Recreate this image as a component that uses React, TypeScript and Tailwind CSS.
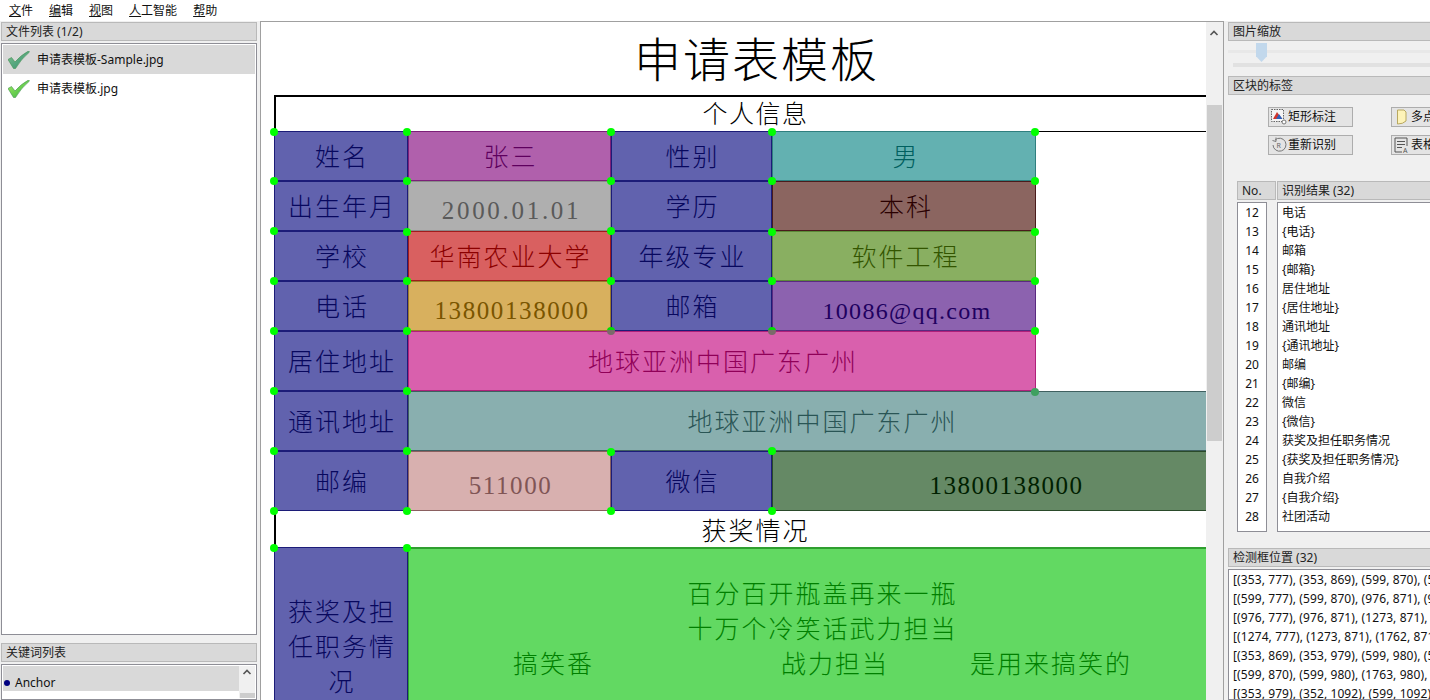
const menus = [
  ['文', '件'],
  ['编', '辑'],
  ['视', '图'],
  ['人', '工智能'],
  ['帮', '助'],
];

const results = [
  ['12', '电话'],
  ['13', '{电话}'],
  ['14', '邮箱'],
  ['15', '{邮箱}'],
  ['16', '居住地址'],
  ['17', '{居住地址}'],
  ['18', '通讯地址'],
  ['19', '{通讯地址}'],
  ['20', '邮编'],
  ['21', '{邮编}'],
  ['22', '微信'],
  ['23', '{微信}'],
  ['24', '获奖及担任职务情况'],
  ['25', '{获奖及担任职务情况}'],
  ['26', '自我介绍'],
  ['27', '{自我介绍}'],
  ['28', '社团活动'],
];

const boxes = [
  '[(353, 777), (353, 869), (599, 870), (599, 778)]',
  '[(599, 777), (599, 870), (976, 871), (976, 777)]',
  '[(976, 777), (976, 871), (1273, 871), (1274, 777)]',
  '[(1274, 777), (1273, 871), (1762, 871), (1762, 777)]',
  '[(353, 869), (353, 979), (599, 980), (599, 870)]',
  '[(599, 870), (599, 980), (1763, 980), (1762, 871)]',
  '[(353, 979), (352, 1092), (599, 1092), (599, 980)]',
];

// handles sit on top of the table, positions are relative to the canvas
const dots = [
  'left-[9px] top-[106px]', 'left-[142px] top-[106px]', 'left-[346px] top-[106px]', 'left-[507px] top-[106px]', 'left-[770px] top-[106px]',
  'left-[9px] top-[155px]', 'left-[142px] top-[155px]', 'left-[346px] top-[155px]', 'left-[507px] top-[155px]', 'left-[770px] top-[155px]',
  'left-[9px] top-[205px]', 'left-[142px] top-[206px]', 'left-[346px] top-[205px]', 'left-[507px] top-[206px]', 'left-[770px] top-[206px]',
  'left-[9px] top-[255px]', 'left-[142px] top-[255px]', 'left-[346px] top-[255px]', 'left-[507px] top-[255px]', 'left-[770px] top-[255px]',
  'left-[9px] top-[305px]', 'left-[142px] top-[305px]', 'left-[770px] top-[305px]',
  'left-[9px] top-[365px]', 'left-[142px] top-[365px]',
  'left-[9px] top-[425px]', 'left-[142px] top-[425px]', 'left-[346px] top-[426px]', 'left-[507px] top-[425px]',
  'left-[9px] top-[485px]', 'left-[142px] top-[485px]', 'left-[346px] top-[485px]', 'left-[507px] top-[485px]',
  'left-[9px] top-[522px]', 'left-[142px] top-[522px]',
];

const labelCell = 'flex items-center justify-center pl-[2px] bg-[#6162ae] border border-[#1c1c78] text-[#08085e]';
const valueCell = 'flex items-center justify-center border';

function PanelHeader({ children, className = '' }: { children: React.ReactNode; className?: string }) {
  return (
    <div className={`h-[19px] shrink-0 bg-[#d9d9d9] border border-[#b9b9b9] pl-[4px] text-[12px] leading-[17px] text-[#222] whitespace-nowrap ${className}`}>
      {children}
    </div>
  );
}

function Check({ id, from, to }: { id: string; from: string; to: string }) {
  return (
    <svg width="22" height="18" viewBox="0 0 22 18" className="shrink-0">
      <defs>
        <linearGradient id={id} x1="0" y1="0" x2="1" y2="1">
          <stop offset="0" stopColor={from} />
          <stop offset="1" stopColor={to} />
        </linearGradient>
      </defs>
      <path d="M0 8.5 L3.5 6.5 L7 11 Q13 4 20.5 0 L21.5 1 Q13 8 7.5 17.5 L5.5 17.5 Z" fill={`url(#${id})`} stroke="#3f8f4f" strokeWidth="0.6" />
    </svg>
  );
}

function ToolButton({ icon, label }: { icon: React.ReactNode; label: string }) {
  return (
    <div className="w-[85px] h-[20px] shrink-0 flex items-center gap-[1px] pl-[2px] bg-[#e4e4e4] border border-[#adadad] text-[12px] text-[#111] whitespace-nowrap">
      {icon}
      {label}
    </div>
  );
}

export default function App() {
  return (
    <div className="w-[1430px] h-[700px] overflow-hidden bg-[#f0f0f0] flex flex-col font-['Noto_Sans','Noto_Sans_CJK_SC',sans-serif]">
      <div className="h-[21px] shrink-0 bg-white flex items-center pl-[9px] gap-[16px] text-[12px] text-[#111]">
        {menus.map(([a, b]) => (
          <span key={a}>
            <span className="underline">{a}</span>
            {b}
          </span>
        ))}
      </div>

      <div className="flex flex-1 min-h-0">
        {/* left */}
        <div className="w-[258px] shrink-0 flex flex-col pl-[1px] pt-[1px]">
          <PanelHeader className="w-[256px]">文件列表 (1/2)</PanelHeader>
          <div className="w-[256px] h-[592px] mt-[2px] bg-white border border-[#8e8e96] p-[1px] text-[12px] text-[#111]">
            <div className="h-[29px] flex items-center gap-[7px] pl-[5px] bg-[#d9d9d9]">
              <Check id="c1" from="#7fc08f" to="#2f8f6f" />
              申请表模板-Sample.jpg
            </div>
            <div className="h-[29px] flex items-center gap-[7px] pl-[5px]">
              <Check id="c2" from="#a8f060" to="#30b040" />
              申请表模板.jpg
            </div>
          </div>
          <PanelHeader className="w-[256px] mt-[8px]">关键词列表</PanelHeader>
          <div className="w-[256px] flex-1 mt-[2px] bg-white border border-[#8e8e96] p-[1px] flex">
            <div className="flex-1">
              <div className="h-[25px] flex items-center gap-[5px] pl-[1px] pt-[8px] bg-[#d9d9d9] text-[12px] text-[#111]">
                <span className="w-[6px] h-[6px] rounded-full bg-[#000080]" />
                Anchor
              </div>
            </div>
            <div className="w-[16px] bg-[#f0f0f0] flex flex-col items-center">
              <svg width="10" height="8" viewBox="0 0 10 8" className="mt-[2px]">
                <path d="M1.5 6 L5 2.5 L8.5 6" fill="none" stroke="#555" strokeWidth="1.6" />
              </svg>
              <div className="w-[15px] flex-1 mt-[17px] bg-[#cdcdcd]" />
            </div>
          </div>
        </div>

        {/* canvas */}
        <div className="w-[964px] shrink-0 ml-[2px] flex border border-[#a0a0a0] border-b-0">
          <div className="relative w-[945px] h-full overflow-hidden bg-white font-['Liberation_Serif','Noto_Sans_CJK_SC',serif] font-light">
            <div className="w-[961px] ml-[13px]">
              <div className="h-[73px] pt-[5px] pl-[4px] flex items-center justify-center text-[47px] tracking-[2px] text-black">申请表模板</div>
              <div className="h-[36px] pt-[2px] border-t-2 border-l-2 border-black flex items-center justify-center text-[25px] tracking-[1.5px] text-black">个人信息</div>
              <div className="grid grid-cols-[134px_203px_161px_264px_199px] grid-rows-[50px_50px_50px_50px_60px_60px_60px_36px_170px] text-[25px] tracking-[2px]">
                <div className={`${labelCell} pt-[3px]`}>姓名</div>
                <div className={`${valueCell} pt-[3px] pl-[2px] bg-[#b060ac] border-[#7c1f78] text-[#5e005e]`}>张三</div>
                <div className={`${labelCell} pt-[3px]`}>性别</div>
                <div className={`${valueCell} pt-[3px] pl-[4px] bg-[#63b1b1] border-[#2f7f7f] text-[#006060]`}>男</div>
                <div className="border-t border-black" />

                <div className={`${labelCell} pt-[3px]`}>出生年月</div>
                <div className={`${valueCell} bg-[#afafaf] border-[#8a8a8a] text-[#5a5a5a] pt-[9px] pl-[4px] tracking-[2.7px]`}>2000.01.01</div>
                <div className={`${labelCell} pt-[3px]`}>学历</div>
                <div className={`${valueCell} pt-[3px] pl-[4px] bg-[#8b6560] border-[#4a1c1c] text-[#2a0000]`}>本科</div>
                <div />

                <div className={`${labelCell} pt-[3px]`}>学校</div>
                <div className={`${valueCell} pt-[3px] pl-[2px] bg-[#d96060] border-[#a01c1c] text-[#8c0000]`}>华南农业大学</div>
                <div className={`${labelCell} pt-[3px]`}>年级专业</div>
                <div className={`${valueCell} pt-[3px] pl-[3px] bg-[#89af61] border-[#5c8a38] text-[#335500]`}>软件工程</div>
                <div />

                <div className={`${labelCell} pt-[3px]`}>电话</div>
                <div className={`${valueCell} bg-[#d8b05e] border-[#9a7a2a] text-[#7a5500] pt-[9px] pl-[5px] tracking-[1.6px]`}>13800138000</div>
                <div className={`${labelCell} pt-[3px]`}>邮箱</div>
                <div className={`${valueCell} bg-[#8c62af] border-[#5a2a80] text-[#200060] pt-[9px] pl-[6px] text-[24px] tracking-[1.3px]`}>10086@qq.com</div>
                <div />

                <div className={`${labelCell} pt-[3px]`}>居住地址</div>
                <div className={`${valueCell} pt-[3px] pl-[2px] col-span-3 bg-[#d960ad] border-[#b0207a] text-[#900058]`}>地球亚洲中国广东广州</div>
                <div />

                <div className={`${labelCell} pt-[3px]`}>通讯地址</div>
                <div className={`${valueCell} pt-[3px] pl-[2px] col-span-4 bg-[#89afaf] border-[#3f6060] text-[#2a5555]`}>地球亚洲中国广东广州</div>

                <div className={`${labelCell} pt-[3px]`}>邮编</div>
                <div className={`${valueCell} bg-[#d8b0af] border-[#8a6060] text-[#805555] pt-[9px] pl-[2px] tracking-[1.6px]`}>511000</div>
                <div className={`${labelCell} pt-[3px]`}>微信</div>
                <div className={`${valueCell} col-span-2 bg-[#658965] border-[#2a4a2a] text-[#002000] pt-[9px] pl-[6px] tracking-[1.5px]`}>13800138000</div>

                <div className="col-span-5 flex items-center justify-center pt-[6px] border-l-2 border-black text-black">获奖情况</div>

                <div className={`${labelCell} flex-col leading-[35px] pt-[30px]`}>
                  <span>获奖及担</span>
                  <span>任职务情</span>
                  <span>况</span>
                </div>
                <div className="col-span-4 bg-[#62d962] border-t-2 border-l border-[#2f9f2f] text-[#008000] leading-[35px] pt-[28px]">
                  <div className="text-center pl-[1px]">百分百开瓶盖再来一瓶</div>
                  <div className="text-center pl-[1px]">十万个冷笑话武力担当</div>
                  <div className="flex pl-[104px]">
                    <span>搞笑番</span>
                    <span className="ml-[187px]">战力担当</span>
                    <span className="ml-[81px]">是用来搞笑的</span>
                  </div>
                </div>
              </div>
            </div>

            {dots.map((d) => (
              <span key={d} className={`absolute w-[8px] h-[8px] rounded-full bg-[#00ff00] ${d}`} />
            ))}
            <span className="absolute left-[346px] top-[305px] w-[8px] h-[8px] rounded-full bg-[linear-gradient(#00e000_40%,#7a6a6a_40%)]" />
            <span className="absolute left-[507px] top-[305px] w-[8px] h-[8px] rounded-full bg-[linear-gradient(#00e000_40%,#7a6a6a_40%)]" />
            <span className="absolute left-[770px] top-[366px] w-[8px] h-[8px] rounded-full bg-[#3fa060]" />
          </div>
          {/* scrollbar */}
          <div className="w-[16px] bg-[#f0f0f0] flex flex-col items-center">
            <svg width="10" height="8" viewBox="0 0 10 8" className="mt-[7px]">
              <path d="M1.5 6 L5 2.5 L8.5 6" fill="none" stroke="#555" strokeWidth="1.6" />
            </svg>
            <div className="w-[15px] h-[336px] mt-[68px] bg-[#cdcdcd]" />
          </div>
        </div>

        {/* right */}
        <div className="flex-1 min-w-0 overflow-hidden pl-[4px] pt-[1px]">
          <div className="w-[300px] h-full flex flex-col">
            <PanelHeader>图片缩放</PanelHeader>
            <div className="relative h-[35px] shrink-0">
              <div className="absolute left-0 right-0 top-[9px] h-[3px] bg-[#e8e8e8]" />
              <div className="absolute left-[28px] top-[2px] w-[11px] h-[19px] bg-[#c2d8ec] [clip-path:polygon(0_0,100%_0,100%_70%,50%_100%,0_70%)]" />
              <div className="absolute left-[5px] right-0 top-[22px] h-[4px] bg-[#e1e1e1]" />
            </div>
            <PanelHeader>区块的标签</PanelHeader>
            <div className="pl-[40px] pt-[12px] flex flex-col gap-[8px]">
              <div className="flex gap-[38px]">
                <ToolButton
                  label="矩形标注"
                  icon={
                    <svg width="16" height="16" viewBox="0 0 16 16" className="shrink-0">
                      <rect x="0.5" y="0.5" width="12" height="12" fill="#f4f4f4" stroke="#666" strokeDasharray="1.5 1" />
                      <path d="M2 10 L6 3 L11 10 Z" fill="#d0342c" />
                      <path d="M5 10 L8 5 L11.5 10 Z" fill="#2f5fb8" />
                      <circle cx="13" cy="13" r="2" fill="#fff" stroke="#777" />
                    </svg>
                  }
                />
                <ToolButton
                  label="多点标注"
                  icon={
                    <svg width="16" height="16" viewBox="0 0 16 16" className="shrink-0">
                      <path d="M3.5 1 H10 L12 3 V12 Q9 15 3.5 15 Z" fill="#fdf3b8" stroke="#b8a860" />
                    </svg>
                  }
                />
              </div>
              <div className="flex gap-[38px]">
                <ToolButton
                  label="重新识别"
                  icon={
                    <svg width="16" height="16" viewBox="0 0 16 16" className="shrink-0">
                      <path d="M4 3 A6.5 6.5 0 1 1 2 8" fill="none" stroke="#777" />
                      <path d="M5 0.5 L5 4.5 L1.5 3.5" fill="none" stroke="#777" />
                      <text x="5.5" y="11" fontSize="7" fill="#666">R</text>
                    </svg>
                  }
                />
                <ToolButton
                  label="表格识别"
                  icon={
                    <svg width="16" height="16" viewBox="0 0 16 16" className="shrink-0">
                      <path d="M1 1 H13 V9 M1 1 V15 H8" fill="none" stroke="#555" />
                      <path d="M3 4.5 H11 M3 7.5 H11 M3 10.5 H8" stroke="#555" />
                      <text x="9" y="15.5" fontSize="7" fill="#555">A</text>
                    </svg>
                  }
                />
              </div>
            </div>

            <div className="ml-[9px] mt-[26px] flex gap-[1px] text-[12px]">
              <PanelHeader className="w-[39px]">No.</PanelHeader>
              <PanelHeader className="w-[240px]">识别结果 (32)</PanelHeader>
            </div>
            <div className="ml-[9px] mt-[2px] h-[330px] shrink-0 flex text-[12px] leading-[19px] text-[#111]">
              <div className="w-[30px] bg-white border border-[#8e8e96] text-center overflow-hidden">
                {results.map(([n]) => (
                  <div key={n}>{n}</div>
                ))}
              </div>
              <div className="w-[240px] ml-[10px] bg-white border border-[#8e8e96] pl-[4px] overflow-hidden">
                {results.map(([n, t]) => (
                  <div key={n}>{t}</div>
                ))}
              </div>
            </div>

            <PanelHeader className="mt-[16px]">检测框位置 (32)</PanelHeader>
            <div className="mt-[2px] flex-1 bg-white border border-[#8e8e96] pl-[4px] text-[12px] tracking-[0.1px] leading-[19px] text-[#111] whitespace-nowrap overflow-hidden">
              {boxes.map((b) => (
                <div key={b}>{b}</div>
              ))}
            </div>
          </div>
        </div>
      </div>
    </div>
  );
}
